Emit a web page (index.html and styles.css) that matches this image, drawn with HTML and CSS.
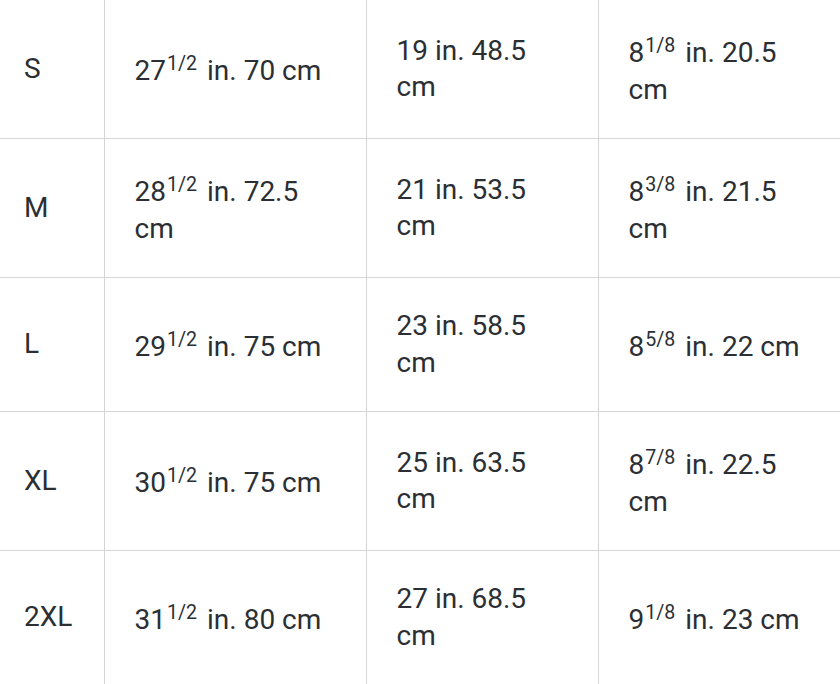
FILE: index.html
```html
<!DOCTYPE html>
<html>
<head>
<meta charset="utf-8">
<link rel="stylesheet" href="styles.css">
</head>
<body>
<table class="size-table">
  <colgroup>
    <col class="c-size">
    <col class="c-length">
    <col class="c-chest">
    <col class="c-sleeve">
  </colgroup>
  <tbody>
    <tr>
      <td>S</td>
      <td>27<sup>1/2</sup> in. 70 cm</td>
      <td>19 in. 48.5 cm</td>
      <td>8<sup>1/8</sup> in. 20.5 cm</td>
    </tr>
    <tr>
      <td>M</td>
      <td>28<sup>1/2</sup> in. 72.5 cm</td>
      <td>21 in. 53.5 cm</td>
      <td>8<sup>3/8</sup> in. 21.5 cm</td>
    </tr>
    <tr>
      <td>L</td>
      <td>29<sup>1/2</sup> in. 75 cm</td>
      <td>23 in. 58.5 cm</td>
      <td>8<sup>5/8</sup> in. 22 cm</td>
    </tr>
    <tr>
      <td>XL</td>
      <td>30<sup>1/2</sup> in. 75 cm</td>
      <td>25 in. 63.5 cm</td>
      <td>8<sup>7/8</sup> in. 22.5 cm</td>
    </tr>
    <tr>
      <td>2XL</td>
      <td>31<sup>1/2</sup> in. 80 cm</td>
      <td>27 in. 68.5 cm</td>
      <td>9<sup>1/8</sup> in. 23 cm</td>
    </tr>
  </tbody>
</table>
</body>
</html>
```

FILE: styles.css
```css
html, body {
  margin: 0;
  padding: 0;
  background: #ffffff;
}

body {
  font-family: Roboto, "Liberation Sans", sans-serif;
  font-size: 28px;
  line-height: 1.3;
  color: #2b2f34;
  overflow: hidden;
}

.size-table {
  width: 840px;
  border-collapse: collapse;
  table-layout: fixed;
}

.c-size { width: 104px; }
.c-length { width: 262px; }
.c-chest { width: 232px; }
.c-sleeve { width: 242px; }

.size-table td {
  padding: 30px 30px 30px 30px;
  vertical-align: middle;
  text-align: left;
  border-right: 1px solid #d5d5d5;
  border-bottom: 1px solid #d5d5d5;
}

.size-table td:first-child {
  padding-left: 24px;
}

.size-table td:last-child {
  border-right: none;
}

.size-table sup {
  font-size: 0.7em;
  line-height: 1.6;
  margin-left: 1px;
  margin-right: 3px;
}
```
